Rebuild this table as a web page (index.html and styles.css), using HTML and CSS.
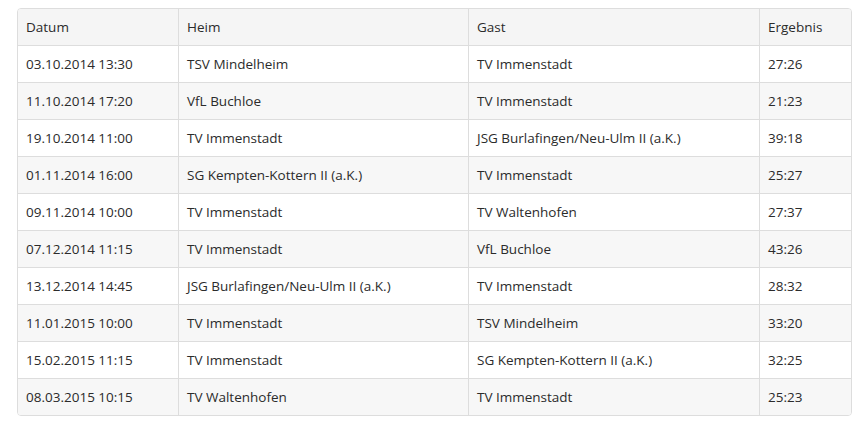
FILE: index.html
```html
<!DOCTYPE html>
<html lang="de">
<head>
<meta charset="utf-8">
<title>Spiele</title>
<link rel="stylesheet" href="styles.css">
</head>
<body>
<table class="games">
  <colgroup>
    <col class="c-date">
    <col class="c-home">
    <col class="c-guest">
    <col class="c-result">
  </colgroup>
  <thead>
    <tr><th>Datum</th><th>Heim</th><th>Gast</th><th>Ergebnis</th></tr>
  </thead>
  <tbody>
    <tr><td>03.10.2014 13:30</td><td>TSV Mindelheim</td><td>TV Immenstadt</td><td>27:26</td></tr>
    <tr><td>11.10.2014 17:20</td><td>VfL Buchloe</td><td>TV Immenstadt</td><td>21:23</td></tr>
    <tr><td>19.10.2014 11:00</td><td>TV Immenstadt</td><td>JSG Burlafingen/Neu-Ulm II (a.K.)</td><td>39:18</td></tr>
    <tr><td>01.11.2014 16:00</td><td>SG Kempten-Kottern II (a.K.)</td><td>TV Immenstadt</td><td>25:27</td></tr>
    <tr><td>09.11.2014 10:00</td><td>TV Immenstadt</td><td>TV Waltenhofen</td><td>27:37</td></tr>
    <tr><td>07.12.2014 11:15</td><td>TV Immenstadt</td><td>VfL Buchloe</td><td>43:26</td></tr>
    <tr><td>13.12.2014 14:45</td><td>JSG Burlafingen/Neu-Ulm II (a.K.)</td><td>TV Immenstadt</td><td>28:32</td></tr>
    <tr><td>11.01.2015 10:00</td><td>TV Immenstadt</td><td>TSV Mindelheim</td><td>33:20</td></tr>
    <tr><td>15.02.2015 11:15</td><td>TV Immenstadt</td><td>SG Kempten-Kottern II (a.K.)</td><td>32:25</td></tr>
    <tr><td>08.03.2015 10:15</td><td>TV Waltenhofen</td><td>TV Immenstadt</td><td>25:23</td></tr>
  </tbody>
</table>
</body>
</html>
```
FILE: styles.css
```css
html, body {
  margin: 0;
  padding: 0;
  background: #ffffff;
}
body {
  padding: 8px 0 0 17px;
  font-family: "Open Sans", "DejaVu Sans", sans-serif;
  font-size: 13.5px;
  color: #2b2b2b;
}
.games {
  width: 835px;
  table-layout: fixed;
  border-collapse: separate;
  border-spacing: 0;
  border: 1px solid #dddddd;
  border-radius: 4px;
  overflow: hidden;
}
.c-date { width: 160px; }
.c-home { width: 290px; }
.c-guest { width: 291px; }
.c-result { width: 92px; }
.games th,
.games td {
  height: 36px;
  padding: 0 8px;
  text-align: left;
  font-weight: normal;
  vertical-align: middle;
  white-space: nowrap;
  box-sizing: border-box;
}
.games th + th,
.games td + td {
  border-left: 1px solid #dddddd;
}
.games tbody td {
  border-top: 1px solid #dddddd;
  height: 37px;
}
.games thead th {
  background: #f5f5f5;
}
.games tbody tr:nth-child(even) td {
  background: #f7f7f7;
}
```
